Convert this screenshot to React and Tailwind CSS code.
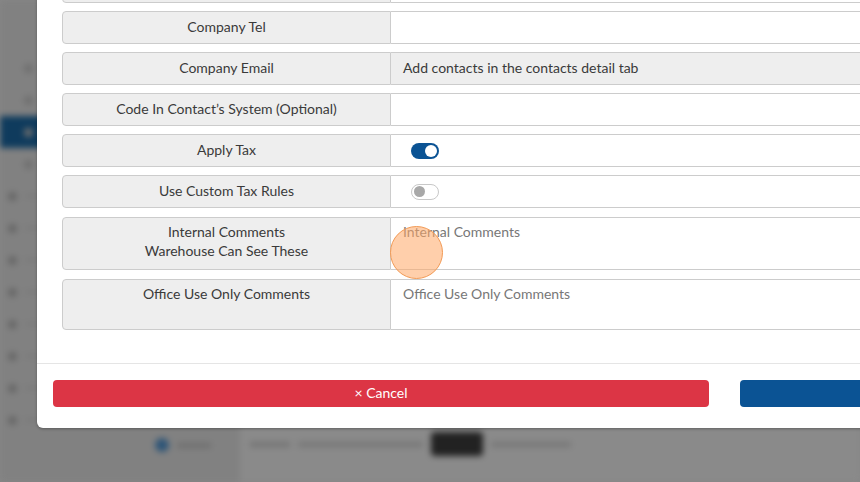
import React from 'react';

const rows = [
  { label: '', value: '' },
  { label: 'Company Tel', value: '' },
  { label: 'Company Email', value: 'Add contacts in the contacts detail tab', gray: true },
  { label: 'Code In Contact’s System (Optional)', value: '' },
  { label: 'Apply Tax', toggle: true, on: true },
  { label: 'Use Custom Tax Rules', toggle: true, on: false },
];

function Toggle({ on }) {
  return on ? (
    <div className="w-[28px] h-[16px] rounded-full bg-[#0b5394] flex items-center justify-end pr-[2px]">
      <div className="w-[12px] h-[12px] rounded-full bg-white" />
    </div>
  ) : (
    <div className="w-[28px] h-[16px] rounded-full bg-white border border-[#c8c8c8] flex items-center pl-[2px]">
      <div className="w-[11px] h-[11px] rounded-full bg-[#a8a8a8]" />
    </div>
  );
}

function Backdrop() {
  const side = [60, 92, 124, 158, 190, 222, 254, 286, 318, 350, 382, 418];
  return (
    <div className="absolute inset-0 flex blur-[3px]">
      <div className="w-[240px] bg-[#818181] flex flex-col pt-[52px]">
        {side.map((y, i) => (
          <div key={y} className={`h-[32px] flex items-center gap-2 pl-[8px] ${i === 2 ? 'bg-[#0f3b5d]' : ''}`}>
            <div className={`w-[9px] h-[9px] rounded-full ${i < 4 ? 'ml-[16px] bg-[#6e6e6e]' : 'bg-[#666]'}`} />
            <div className="w-[40px] h-[4px] bg-[#7a7a7a]" />
          </div>
        ))}
        <div className="flex items-center gap-2 pl-[155px] mt-[2px]">
          <div className="w-[14px] h-[14px] rounded-full bg-[#2e5577]" />
          <div className="w-[34px] h-[5px] bg-[#6f6f6f]" />
        </div>
      </div>
      <div className="flex-1 bg-[#8a8a8a] pt-[432px] pl-[10px]">
        <div className="flex items-center gap-2">
          <div className="w-[40px] h-[5px] bg-[#737373]" />
          <div className="w-[125px] h-[5px] bg-[#767676]" />
          <div className="w-[52px] h-[24px] rounded bg-[#222]" />
          <div className="w-[80px] h-[5px] bg-[#767676]" />
        </div>
      </div>
    </div>
  );
}

export default function App() {
  return (
    <div className="relative w-[860px] h-[482px] overflow-hidden bg-[#878787] font-['Lato',sans-serif] text-[14px] text-[#3a3a3a]">
      <Backdrop />
      <div className="absolute left-[37px] top-[-44px] w-[1100px] bg-white rounded-md shadow-[0_1px_3px_rgba(0,0,0,0.3)]">
        <div className="px-[25px] pt-[14px] pb-[33px] flex flex-col gap-[8px]">
          {rows.map((r, i) => (
            <div key={i} className="flex h-[33px]">
              <div className="w-[329px] shrink-0 bg-[#eeeeee] border border-[#cccccc] rounded-l-[4px] flex items-center justify-center pb-[3px]">
                {r.label}
              </div>
              <div className={`flex-1 border border-l-0 border-[#cccccc] flex items-center ${r.gray ? 'bg-[#eeeeee] pb-[3px]' : 'bg-white'} ${r.toggle ? 'pl-[20px]' : 'pl-[12px]'}`}>
                {r.toggle ? <Toggle on={r.on} /> : r.value}
              </div>
            </div>
          ))}
          <div className="flex h-[53px] mt-[1px]">
            <div className="w-[329px] shrink-0 bg-[#eeeeee] border border-[#cccccc] rounded-l-[4px] flex flex-col items-center pt-[4px] leading-[19px]">
              <span>Internal Comments</span>
              <span>Warehouse Can See These</span>
            </div>
            <div className="flex-1 border border-l-0 border-[#cccccc] bg-white pl-[12px] pt-[4px] leading-[19px] text-[#777]">
              Internal Comments
            </div>
          </div>
          <div className="flex h-[51px] mt-[1px]">
            <div className="w-[329px] shrink-0 bg-[#eeeeee] border border-[#cccccc] rounded-l-[4px] flex justify-center pt-[4px] leading-[19px]">
              Office Use Only Comments
            </div>
            <div className="flex-1 border border-l-0 border-[#cccccc] bg-white pl-[12px] pt-[4px] leading-[19px] text-[#777]">
              Office Use Only Comments
            </div>
          </div>
        </div>
        <div className="border-t border-[#e5e5e5] px-[16px] pt-[16px] pb-[21px] flex gap-[31px]">
          <button className="w-[656px] h-[27px] rounded bg-[#dc3545] text-white flex items-center justify-center pb-[2px]">
            × Cancel
          </button>
          <button className="w-[370px] h-[27px] rounded bg-[#0b5394] text-white" />
        </div>
      </div>
      <div className="absolute left-[390px] top-[226px] w-[53px] h-[53px] rounded-full bg-[#ffa866]/55 border border-[#f29a55]" />
    </div>
  );
}
